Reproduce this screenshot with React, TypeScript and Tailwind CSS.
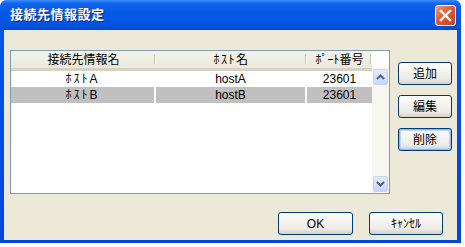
import React from "react";

// 接続先情報（一覧に表示する行）
type Host = { name: string; host: string; port: number };

const hosts: Host[] = [
  { name: "ﾎｽﾄA", host: "hostA", port: 23601 },
  { name: "ﾎｽﾄB", host: "hostB", port: 23601 },
];

const font = "font-['Liberation_Sans','Noto_Sans_CJK_JP',sans-serif]";

// XP風ボタン
function XpButton({ label, w, focused }: { label: string; w: string; focused?: boolean }) {
  return (
    <button
      className={`${w} h-[23px] rounded-[3px] border border-[#003c74] bg-[linear-gradient(to_bottom,#ffffff_0%,#f4f3ee_40%,#ecebe6_75%,#d6d0c5_100%)] text-[12px] text-black leading-none ${
        focused ? "shadow-[inset_0_0_0_1px_#98b4f0,inset_0_0_0_2px_#c2d5fc]" : ""
      }`}
    >
      {label}
    </button>
  );
}

function CloseButton() {
  return (
    <div className="w-[21px] h-[21px] rounded-[3px] border border-white bg-[linear-gradient(135deg,#f29a7c_0%,#e35a32_45%,#c8401c_100%)] flex items-center justify-center">
      <svg width="13" height="13" viewBox="0 0 13 13">
        <path d="M2 2 L11 11 M11 2 L2 11" stroke="#ffffff" strokeWidth="2.4" strokeLinecap="square" />
      </svg>
    </div>
  );
}

function ScrollArrow({ dir }: { dir: "up" | "down" }) {
  return (
    <div className="mx-[1px] h-[16px] rounded-[2px] border border-[#c3d3fd] bg-[linear-gradient(to_bottom,#e4ecfd,#c6d6fc)] flex items-center justify-center">
      <svg width="9" height="6" viewBox="0 0 9 6">
        <path d={dir === "up" ? "M1 5 L4.5 1.5 L8 5" : "M1 1 L4.5 4.5 L8 1"} stroke="#4d6185" strokeWidth="2" fill="none" />
      </svg>
    </div>
  );
}

function HeaderCell({ label, w, spacing }: { label: string; w: string; spacing?: string }) {
  return (
    <div className={`${w} h-full flex items-center justify-center relative`}>
      <span className={spacing}>{label}</span>
      <div className="absolute right-0 top-[3px] bottom-[4px] w-[2px] border-l border-[#c7c5b2] border-r border-r-white" />
    </div>
  );
}

export default function App() {
  return (
    <div className={`w-[465px] h-[247px] bg-white ${font}`}>
      <div className="w-[461px] h-[243px] rounded-t-[7px] bg-[linear-gradient(to_bottom,#0058ee,#0047d8)] flex flex-col">
        {/* タイトルバー */}
        <div className="h-[30px] shrink-0 rounded-t-[7px] bg-[linear-gradient(to_bottom,#3b8dfb_0%,#1064ec_12%,#0557e6_45%,#0254e2_80%,#0349cf_100%)] flex items-center justify-between pl-[10px] pr-[5px]">
          <span className="text-[13px] font-bold text-white tracking-[0.5px] [text-shadow:1px_1px_0_#0a2b8a]">接続先情報設定</span>
          <CloseButton />
        </div>

        {/* 本体 */}
        <div className="flex-1 mx-[4px] mb-[3px] bg-[#ece9d8] flex flex-col">
          <div className="flex pl-[6px] pt-[20px] gap-[8px]">
            {/* リストビュー */}
            <div className="w-[380px] h-[144px] border border-[#7f9db9] bg-white flex text-[12px] text-black">
              <div className="w-[361px] flex flex-col">
                <div className="h-[17px] flex bg-[linear-gradient(to_bottom,#f3f2ea,#ebeadb)] border-b-[3px] border-[#d6d2c2] box-content">
                  <HeaderCell label="接続先情報名" w="w-[145px]" />
                  <HeaderCell label="ﾎｽﾄ名" w="w-[151px]" spacing="tracking-[1.5px]" />
                  <HeaderCell label="ﾎﾟｰﾄ番号" w="w-[65px]" />
                </div>
                {hosts.map((h, i) => {
                  const sel = i === 1;
                  const cell = sel ? "bg-[#c0c0c0]" : "";
                  return (
                    <div key={h.name} className="h-[16px] flex leading-[16px]">
                      <div className={`w-[145px] text-center border-r-2 border-white tracking-[2px] ${cell}`}>{h.name}</div>
                      <div className={`w-[151px] text-center border-r-2 border-white ${cell}`}>{h.host}</div>
                      <div className={`w-[65px] text-center ${cell}`}>{h.port}</div>
                    </div>
                  );
                })}
              </div>
              {/* スクロールバー */}
              <div className="w-[17px] flex flex-col">
                <div className="h-[17px] bg-[#fdfdfd]" />
                <div className="flex-1 bg-[#f7f6f1] flex flex-col justify-between py-[1px]">
                  <ScrollArrow dir="up" />
                  <ScrollArrow dir="down" />
                </div>
              </div>
            </div>

            {/* 右側ボタン */}
            <div className="flex flex-col gap-[10px] pt-[12px]">
              <XpButton label="追加" w="w-[54px]" />
              <XpButton label="編集" w="w-[54px]" />
              <XpButton label="削除" w="w-[54px]" focused />
            </div>
          </div>

          <div className="flex justify-end gap-[16px] pr-[14px] mt-[18px]">
            <XpButton label="OK" w="w-[75px]" />
            <XpButton label="ｷｬﾝｾﾙ" w="w-[74px]" />
          </div>
        </div>
      </div>
    </div>
  );
}
